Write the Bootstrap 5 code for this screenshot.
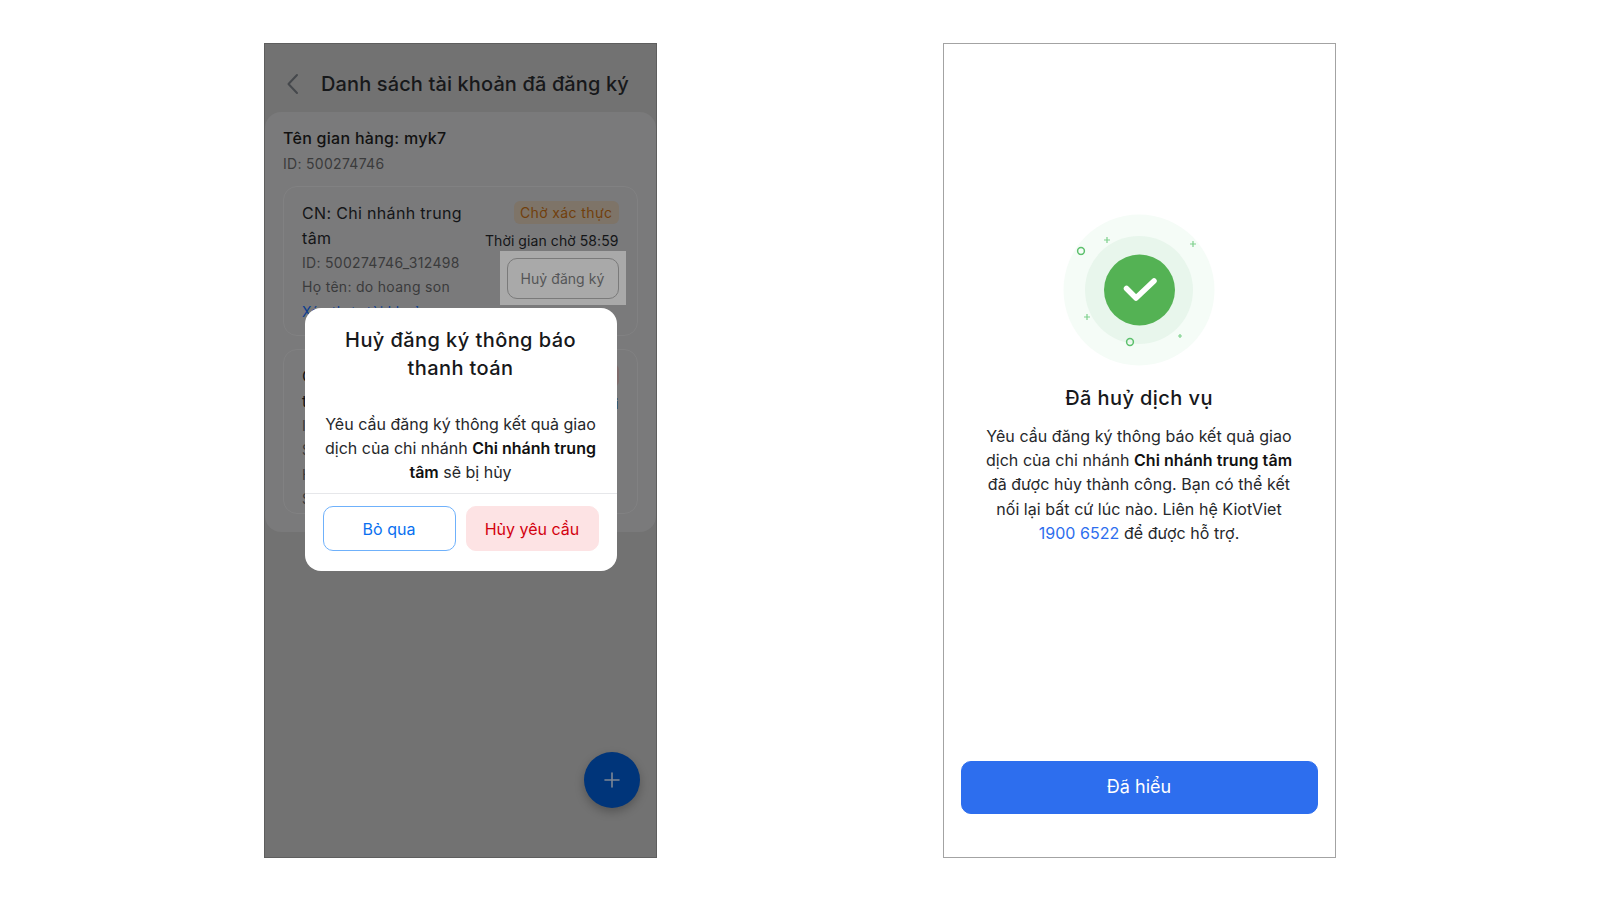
<!DOCTYPE html>
<html lang="vi">
<head>
    <meta charset="UTF-8">
    <meta name="viewport" content="width=device-width, initial-scale=1.0">
    <title>Huỷ đăng ký thông báo thanh toán</title>
    <link rel="stylesheet" href="https://cdn.jsdelivr.net/npm/bootstrap@5.3.0/dist/css/bootstrap.min.css">
    <style>
        body {
            background: #fff;
            font-family: "Inter", "Liberation Sans", sans-serif;
            color: #1a1c1e;
        }
        .screens {
            padding: 43px 0 0 264px;
            gap: 286px;
        }
        .phone {
            width: 392.5px;
            height: 814.5px;
            overflow: hidden;
        }
        .phone-dim {
            background: #727272;
            border: 1px solid #5e5e5e;
        }
        .phone-light {
            width: 393px;
            background: #fff;
            border: 1px solid #a3a3a3;
        }
        .top-bar {
            height: 68px;
            padding: 12px 0 0 20px;
            gap: 20px;
        }
        .top-title {
            font-size: 20px;
            font-weight: 500;
            letter-spacing: .12px;
            color: #17181a;
        }
        .sheet {
            height: 420px;
            background: #7a7a7b;
            border-radius: 16px;
            padding: 14px 18px 0;
        }
        .shop-name {
            font-size: 16px;
            font-weight: 500;
            line-height: 24px;
            letter-spacing: .28px;
            color: #111;
        }
        .muted-line {
            font-size: 14px;
            line-height: 24.5px;
            letter-spacing: .3px;
            color: #3a3b3c;
        }
        .shop-id {
            margin-top: 2px;
        }
        .acc-card {
            border: 1px solid #818182;
            border-radius: 14px;
            padding: 14px 18px 0;
            overflow: hidden;
        }
        .acc-one {
            height: 150px;
            margin-top: 9px;
        }
        .acc-two {
            height: 165px;
            margin-top: 13px;
        }
        .acc-left {
            width: 175px;
        }
        .acc-title {
            font-size: 16px;
            line-height: 25px;
            letter-spacing: .33px;
            color: #141517;
        }
        .acc-link {
            font-size: 14px;
            line-height: 24px;
            letter-spacing: .3px;
            color: #0b3d8f;
            white-space: nowrap;
        }
        .wait-badge {
            font-size: 14px;
            line-height: 23px;
            padding: 0 6px;
            letter-spacing: .4px;
            border-radius: 6px;
            background: #7e7468;
            color: #713f0c;
        }
        .fail-badge {
            font-size: 14px;
            line-height: 23px;
            padding: 0 6px;
            border-radius: 6px;
            background: #7e6c6c;
            color: #701010;
        }
        .wait-time {
            font-size: 14px;
            line-height: 20px;
            margin-top: 7px;
            letter-spacing: .08px;
            color: #141517;
            white-space: nowrap;
        }
        .btn-spot {
            background: #a9a9a9;
            padding: 7px 7px 6px;
            margin: 0 -7px 0 0;
        }
        .btn-outline-dim {
            width: 112px;
            height: 41px;
            padding: 0;
            font-size: 14px;
            letter-spacing: .05px;
            color: #555657;
            border: 1px solid #7a7a7a;
            border-radius: 10px;
        }
        .fab {
            position: absolute;
            right: 16px;
            bottom: 49px;
            width: 56px;
            height: 56px;
            border-radius: 50%;
            background: #00357a;
            box-shadow: 0 4px 10px rgba(0, 0, 0, .25);
        }
        .confirm-box {
            position: absolute;
            left: 39.5px;
            top: 264px;
            width: 312px;
            height: 263px;
            background: #fff;
            border-radius: 16px;
        }
        .confirm-title {
            font-size: 20px;
            font-weight: 500;
            line-height: 28px;
            letter-spacing: .42px;
            padding: 18px 26px 0;
            height: 88px;
            margin: 0;
            color: #17181a;
        }
        .confirm-text {
            font-size: 16px;
            line-height: 24px;
            padding: 16px 18px 9px;
            height: 97px;
            color: #26282b;
        }
        .confirm-text b, .done-text b {
            font-weight: 600;
            color: #111;
        }
        .confirm-actions {
            border-top: 1px solid #e6e7ea;
            padding: 12px 18px;
            gap: 10px;
        }
        .btn-skip, .btn-abort {
            flex: 1;
            height: 45px;
            padding: 0;
            font-size: 16px;
            border-radius: 10px;
        }
        .btn-skip {
            background: #fff;
            border: 1px solid #6fb1fb;
            color: #0a70f0;
        }
        .btn-abort {
            background: #fde3e4;
            border: 1px solid #fde3e4;
            color: #d3000f;
        }
        .done-art {
            margin: 170px auto 0;
            display: block;
        }
        .done-title {
            font-size: 20px;
            font-weight: 500;
            line-height: 28px;
            letter-spacing: .42px;
            margin: 18px 0 0;
            color: #17181a;
        }
        .done-text {
            font-size: 16px;
            line-height: 24.2px;
            letter-spacing: .05px;
            padding: 12px 40px 0;
            color: #26282b;
        }
        .done-phone {
            color: #2d6eee;
        }
        .btn-done {
            height: 53px;
            margin: auto 17px 43px;
            padding-bottom: 8px;
            font-size: 18px;
            background: #2d6eee;
            border: 1px solid #2d6eee;
            border-radius: 10px;
            color: #fff;
        }
    </style>
</head>
<body>
    <div class="screens d-flex">
        <div class="phone phone-dim position-relative d-flex flex-column">
            <div class="top-bar d-flex align-items-center flex-shrink-0">
                <svg width="16" height="22" viewBox="0 0 16 22" fill="none"><path d="M12 2 L3.5 11 L12 20" stroke="#45484c" stroke-width="2" stroke-linecap="round" stroke-linejoin="round"/></svg>
                <div class="top-title">Danh sách tài khoản đã đăng ký</div>
            </div>
            <div class="sheet">
                <div class="shop-name">Tên gian hàng: myk7</div>
                <div class="muted-line shop-id">ID: 500274746</div>

                <div class="acc-card acc-one d-flex justify-content-between">
                    <div class="acc-left">
                        <div class="acc-title">CN: Chi nhánh trung tâm</div>
                        <div class="muted-line">ID: 500274746_312498</div>
                        <div class="muted-line">Họ tên: do hoang son</div>
                        <div class="acc-link">Xác thực tài khoản</div>
                    </div>
                    <div class="d-flex flex-column align-items-end">
                        <span class="wait-badge">Chờ xác thực</span>
                        <span class="wait-time">Thời gian chờ 58:59</span>
                        <div class="btn-spot">
                            <button type="button" class="btn btn-outline-dim">Huỷ đăng ký</button>
                        </div>
                    </div>
                </div>

                <div class="acc-card acc-two d-flex justify-content-between">
                    <div class="acc-left">
                        <div class="acc-title">CN: Chi nhánh</div>
                        <div class="acc-title">trung tâm</div>
                        <div class="muted-line">ID: 500274746</div>
                        <div class="muted-line">Số TK: 1900</div>
                        <div class="muted-line">Họ tên: do</div>
                        <div class="muted-line">SĐT: 0900</div>
                    </div>
                    <div class="d-flex flex-column align-items-end">
                        <span class="fail-badge">Từ chối</span>
                        <span class="wait-time">Lý do từ chối</span>
                    </div>
                </div>
            </div>

            <div class="fab d-flex align-items-center justify-content-center">
                <svg width="16" height="16" viewBox="0 0 16 16" fill="none"><path d="M8 1 V15 M1 8 H15" stroke="#7d8794" stroke-width="1.6" stroke-linecap="round"/></svg>
            </div>

            <div class="confirm-box d-flex flex-column">
                <h5 class="confirm-title text-center">Huỷ đăng ký thông báo thanh toán</h5>
                <div class="confirm-text text-center">Yêu cầu đăng ký thông kết quả giao dịch của chi nhánh <b>Chi nhánh trung tâm</b> sẽ bị hủy</div>
                <div class="confirm-actions d-flex">
                    <button type="button" class="btn btn-skip">Bỏ qua</button>
                    <button type="button" class="btn btn-abort">Hủy yêu cầu</button>
                </div>
            </div>
        </div>

        <div class="phone phone-light d-flex flex-column">
            <svg class="done-art" width="152" height="152" viewBox="0 0 152 152" fill="none">
                <circle cx="76" cy="76" r="75.5" fill="#f5fcf7"/>
                <circle cx="76" cy="76" r="54" fill="#e8f6ec"/>
                <circle cx="76.5" cy="76" r="35.5" fill="#54b254"/>
                <path d="M63.5 74.5 L73 84 L91 67" stroke="#fff" stroke-width="5.5" stroke-linecap="round" stroke-linejoin="round"/>
                <circle cx="18" cy="37" r="3.4" stroke="#5cc06c" stroke-width="1.5"/>
                <circle cx="67" cy="128" r="3.4" stroke="#5cc06c" stroke-width="1.5"/>
                <path d="M44 23 V29 M41 26 H47 M130 27 V33 M127 30 H133 M24 100 V106 M21 103 H27 M117 120 V124 M115 122 H119" stroke="#7ed08c" stroke-width="1.2"/>
            </svg>
            <h5 class="done-title text-center">Đã huỷ dịch vụ</h5>
            <div class="done-text text-center">Yêu cầu đăng ký thông báo kết quả giao dịch của chi nhánh <b>Chi nhánh trung tâm</b> đã được hủy thành công. Bạn có thể kết nối lại bất cứ lúc nào. Liên hệ KiotViet <span class="done-phone">1900 6522</span> để được hỗ trợ.</div>
            <button type="button" class="btn btn-done">Đã hiểu</button>
        </div>
    </div>
    <script src="https://cdn.jsdelivr.net/npm/bootstrap@5.3.0/dist/js/bootstrap.bundle.min.js"></script>
</body>
</html>
